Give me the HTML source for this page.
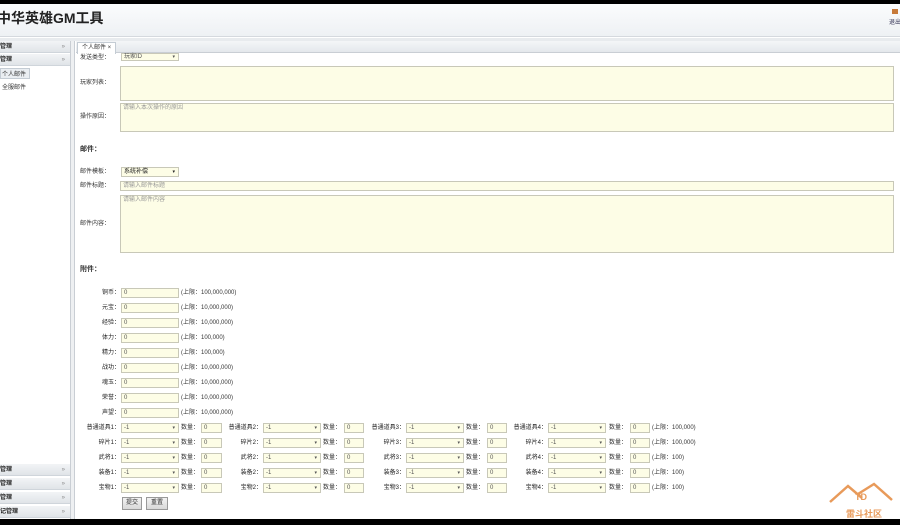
<!DOCTYPE html>
<html><head><meta charset="utf-8"><style>
*{margin:0;padding:0;box-sizing:border-box}
body{width:900px;height:525px;overflow:hidden;background:#fff;position:relative;font-family:"Liberation Sans","Noto Sans CJK SC",sans-serif;font-size:6px;color:#333}
div,span{position:absolute;white-space:nowrap}
.blk{background:#000;left:0;width:900px}
.l{text-align:right;width:60px;color:#222;font-size:6px;line-height:10px}
.i{background:#fdfde6;border:1px solid #c8c8b8;height:10px;font-size:6px;line-height:8px;padding-left:2px;color:#555}
.s{background:#fdfde6;border:1px solid #c8c8b8;height:10px;font-size:6px;line-height:8px;padding-left:2px;color:#555;width:58px}
.s:after{content:"▾";position:absolute;right:3px;top:0;font-size:5px}
.n{font-size:6px;line-height:10px;color:#333}
.sh{left:0;width:70px;height:12px;background:linear-gradient(#f2f4f6,#e0e4e8);border-bottom:1px solid #cfd5db;font-size:6px;line-height:12px;font-weight:bold;color:#222}
.sh:after{content:"»";position:absolute;right:5px;top:0;font-weight:normal;color:#888}
.b{font-weight:bold;font-size:7px}
</style></head><body>
<div class="blk" style="top:0;height:4px"></div>
<div style="top:4px;left:0;width:900px;height:33px;background:linear-gradient(#fbfcfd,#eef1f4);border-bottom:1px solid #d5d9de"></div>
<div style="top:8px;left:-3px;font-size:14px;font-weight:bold;color:#222">中华英雄GM工具</div>
<div style="top:9px;left:892px;width:6px;height:5px;background:#c77a3a"></div>
<div style="top:17px;left:889px;font-size:6px;color:#335">退出</div>
<div style="top:38px;left:0;width:900px;height:3px;background:#e8ebee"></div>
<div style="top:41px;left:0;width:71px;height:478px;background:#fff;border-right:1px solid #c9ced4"></div>
<div class="sh" style="top:41px">管理</div>
<div class="sh" style="top:54px">管理</div>
<div style="top:68px;left:0;width:30px;height:11px;background:#eaeef2;border:1px solid #c4ccd4"></div>
<div style="top:69px;left:2px;font-size:6px">个人邮件</div>
<div style="top:82px;left:2px;font-size:6px">全服邮件</div>
<div class="sh" style="top:464px">管理</div>
<div class="sh" style="top:478px">管理</div>
<div class="sh" style="top:492px">管理</div>
<div class="sh" style="top:506px">记管理</div>
<div style="top:41px;left:71px;width:4px;height:478px;background:#eef0f2;border-right:1px solid #c9ced4"></div>
<div style="top:41px;left:76px;width:824px;height:12px;background:linear-gradient(#f4f6f8,#e4e8ec);border-bottom:1px solid #c9ced4"></div>
<div style="top:42px;left:77px;width:39px;height:12px;background:#fff;border:1px solid #c4ccd4;border-bottom:none;font-size:6px;line-height:10px;padding-left:4px">个人邮件 ×</div>
<div class="n" style="top:53px;left:80px">发送类型：</div>
<div class="s" style="top:53px;left:121px;height:8px;line-height:6px">玩家ID</div>
<div class="i" style="top:66px;left:120px;width:774px;height:35px"></div>
<div class="n" style="top:78px;left:80px">玩家列表：</div>
<div class="i" style="top:103px;left:120px;width:774px;height:29px;color:#999">请输入本次操作的原因</div>
<div class="n" style="top:112px;left:80px">操作原因：</div>
<div class="b" style="top:144px;left:80px">邮件：</div>
<div class="n" style="top:167px;left:80px">邮件模板：</div>
<div class="s" style="top:167px;left:121px;color:#222">系统补偿</div>
<div class="n" style="top:181px;left:80px">邮件标题：</div>
<div class="i" style="top:181px;left:120px;width:774px;color:#999">请输入邮件标题</div>
<div class="i" style="top:195px;left:120px;width:774px;height:58px;color:#999">请输入邮件内容</div>
<div class="n" style="top:219px;left:80px">邮件内容：</div>
<div class="b" style="top:264px;left:80px">附件：</div>
<div class="l" style="top:288px;left:60px">铜币：</div><div class="i" style="top:288px;left:121px;width:58px">0</div><div class="n" style="top:288px;left:181px">(上限：100,000,000)</div>
<div class="l" style="top:303px;left:60px">元宝：</div><div class="i" style="top:303px;left:121px;width:58px">0</div><div class="n" style="top:303px;left:181px">(上限：10,000,000)</div>
<div class="l" style="top:318px;left:60px">经验：</div><div class="i" style="top:318px;left:121px;width:58px">0</div><div class="n" style="top:318px;left:181px">(上限：10,000,000)</div>
<div class="l" style="top:333px;left:60px">体力：</div><div class="i" style="top:333px;left:121px;width:58px">0</div><div class="n" style="top:333px;left:181px">(上限：100,000)</div>
<div class="l" style="top:348px;left:60px">精力：</div><div class="i" style="top:348px;left:121px;width:58px">0</div><div class="n" style="top:348px;left:181px">(上限：100,000)</div>
<div class="l" style="top:363px;left:60px">战功：</div><div class="i" style="top:363px;left:121px;width:58px">0</div><div class="n" style="top:363px;left:181px">(上限：10,000,000)</div>
<div class="l" style="top:378px;left:60px">魂玉：</div><div class="i" style="top:378px;left:121px;width:58px">0</div><div class="n" style="top:378px;left:181px">(上限：10,000,000)</div>
<div class="l" style="top:393px;left:60px">荣誉：</div><div class="i" style="top:393px;left:121px;width:58px">0</div><div class="n" style="top:393px;left:181px">(上限：10,000,000)</div>
<div class="l" style="top:408px;left:60px">声望：</div><div class="i" style="top:408px;left:121px;width:58px">0</div><div class="n" style="top:408px;left:181px">(上限：10,000,000)</div>
<div class="l" style="top:423px;left:60px">普通道具1：</div><div class="s" style="top:423px;left:121px">-1</div><div class="n" style="top:423px;left:181px">数量：</div><div class="i" style="top:423px;left:201px;width:21px">0</div>
<div class="l" style="top:438px;left:60px">碎片1：</div><div class="s" style="top:438px;left:121px">-1</div><div class="n" style="top:438px;left:181px">数量：</div><div class="i" style="top:438px;left:201px;width:21px">0</div>
<div class="l" style="top:453px;left:60px">武将1：</div><div class="s" style="top:453px;left:121px">-1</div><div class="n" style="top:453px;left:181px">数量：</div><div class="i" style="top:453px;left:201px;width:21px">0</div>
<div class="l" style="top:468px;left:60px">装备1：</div><div class="s" style="top:468px;left:121px">-1</div><div class="n" style="top:468px;left:181px">数量：</div><div class="i" style="top:468px;left:201px;width:21px">0</div>
<div class="l" style="top:483px;left:60px">宝物1：</div><div class="s" style="top:483px;left:121px">-1</div><div class="n" style="top:483px;left:181px">数量：</div><div class="i" style="top:483px;left:201px;width:21px">0</div>
<div class="l" style="top:423px;left:202px">普通道具2：</div><div class="s" style="top:423px;left:263px">-1</div><div class="n" style="top:423px;left:323px">数量：</div><div class="i" style="top:423px;left:344px;width:20px">0</div>
<div class="l" style="top:438px;left:202px">碎片2：</div><div class="s" style="top:438px;left:263px">-1</div><div class="n" style="top:438px;left:323px">数量：</div><div class="i" style="top:438px;left:344px;width:20px">0</div>
<div class="l" style="top:453px;left:202px">武将2：</div><div class="s" style="top:453px;left:263px">-1</div><div class="n" style="top:453px;left:323px">数量：</div><div class="i" style="top:453px;left:344px;width:20px">0</div>
<div class="l" style="top:468px;left:202px">装备2：</div><div class="s" style="top:468px;left:263px">-1</div><div class="n" style="top:468px;left:323px">数量：</div><div class="i" style="top:468px;left:344px;width:20px">0</div>
<div class="l" style="top:483px;left:202px">宝物2：</div><div class="s" style="top:483px;left:263px">-1</div><div class="n" style="top:483px;left:323px">数量：</div><div class="i" style="top:483px;left:344px;width:20px">0</div>
<div class="l" style="top:423px;left:345px">普通道具3：</div><div class="s" style="top:423px;left:406px">-1</div><div class="n" style="top:423px;left:466px">数量：</div><div class="i" style="top:423px;left:487px;width:20px">0</div>
<div class="l" style="top:438px;left:345px">碎片3：</div><div class="s" style="top:438px;left:406px">-1</div><div class="n" style="top:438px;left:466px">数量：</div><div class="i" style="top:438px;left:487px;width:20px">0</div>
<div class="l" style="top:453px;left:345px">武将3：</div><div class="s" style="top:453px;left:406px">-1</div><div class="n" style="top:453px;left:466px">数量：</div><div class="i" style="top:453px;left:487px;width:20px">0</div>
<div class="l" style="top:468px;left:345px">装备3：</div><div class="s" style="top:468px;left:406px">-1</div><div class="n" style="top:468px;left:466px">数量：</div><div class="i" style="top:468px;left:487px;width:20px">0</div>
<div class="l" style="top:483px;left:345px">宝物3：</div><div class="s" style="top:483px;left:406px">-1</div><div class="n" style="top:483px;left:466px">数量：</div><div class="i" style="top:483px;left:487px;width:20px">0</div>
<div class="l" style="top:423px;left:487px">普通道具4：</div><div class="s" style="top:423px;left:548px">-1</div><div class="n" style="top:423px;left:609px">数量：</div><div class="i" style="top:423px;left:630px;width:20px">0</div><div class="n" style="top:423px;left:652px">(上限：100,000)</div>
<div class="l" style="top:438px;left:487px">碎片4：</div><div class="s" style="top:438px;left:548px">-1</div><div class="n" style="top:438px;left:609px">数量：</div><div class="i" style="top:438px;left:630px;width:20px">0</div><div class="n" style="top:438px;left:652px">(上限：100,000)</div>
<div class="l" style="top:453px;left:487px">武将4：</div><div class="s" style="top:453px;left:548px">-1</div><div class="n" style="top:453px;left:609px">数量：</div><div class="i" style="top:453px;left:630px;width:20px">0</div><div class="n" style="top:453px;left:652px">(上限：100)</div>
<div class="l" style="top:468px;left:487px">装备4：</div><div class="s" style="top:468px;left:548px">-1</div><div class="n" style="top:468px;left:609px">数量：</div><div class="i" style="top:468px;left:630px;width:20px">0</div><div class="n" style="top:468px;left:652px">(上限：100)</div>
<div class="l" style="top:483px;left:487px">宝物4：</div><div class="s" style="top:483px;left:548px">-1</div><div class="n" style="top:483px;left:609px">数量：</div><div class="i" style="top:483px;left:630px;width:20px">0</div><div class="n" style="top:483px;left:652px">(上限：100)</div>
<div style="top:497px;left:122px;width:20px;height:13px;background:linear-gradient(#f2f2f2,#d8d8d8);border:1px solid #999;font-size:6px;line-height:11px;text-align:center">提交</div>
<div style="top:497px;left:146px;width:22px;height:13px;background:linear-gradient(#f2f2f2,#d8d8d8);border:1px solid #999;font-size:6px;line-height:11px;text-align:center">重置</div>
<svg style="position:absolute;left:828px;top:482px" width="66" height="26" viewBox="0 0 66 26"><path d="M2 20 L20 4 L34 16 M30 12 L46 2 L64 18" fill="none" stroke="#e89a5a" stroke-width="2.5"/><text x="27" y="18" font-size="9" font-weight="bold" fill="#e89a5a" font-family="Liberation Sans">TD</text></svg>
<div style="top:507px;left:846px;font-size:9px;font-weight:bold;color:#e89a5a">雷斗社区</div>
<div class="blk" style="top:519px;height:6px"></div>
</body></html>
